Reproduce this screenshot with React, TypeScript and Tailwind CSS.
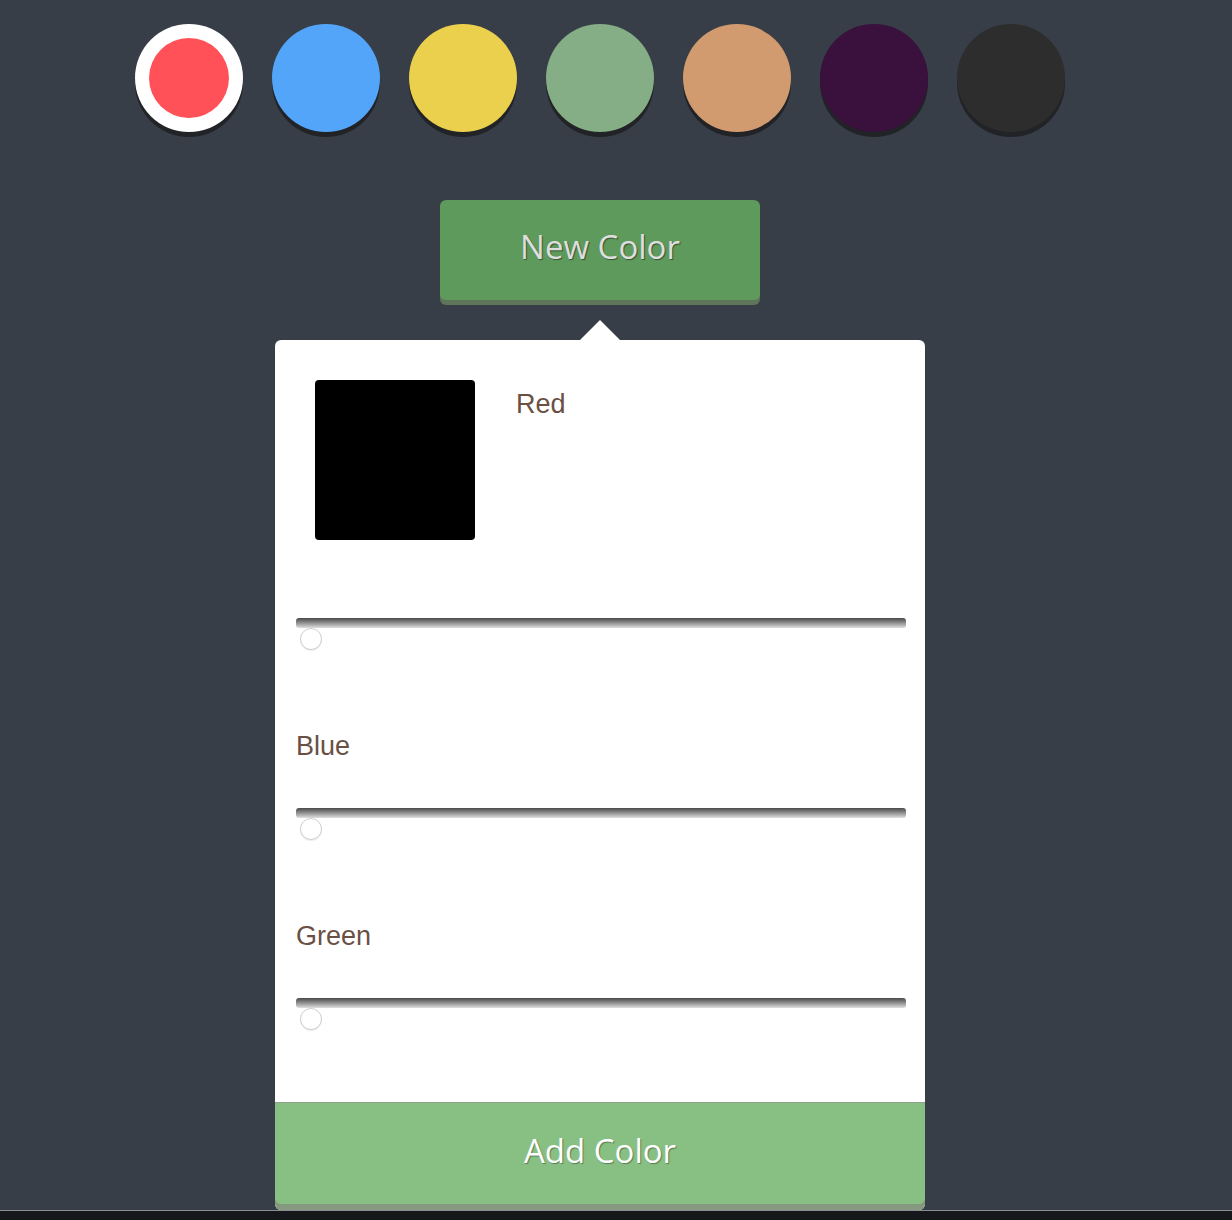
import React from 'react';

const swatches = [
  { color: 'bg-[#ff5157]', selected: true },
  { color: 'bg-[#52a5f9]' },
  { color: 'bg-[#ebd04e]' },
  { color: 'bg-[#85ad86]' },
  { color: 'bg-[#d19b6f]' },
  { color: 'bg-[#3a103d]' },
  { color: 'bg-[#2d2d2d]' },
];

const Slider = () => (
  <div className="relative h-[32px]">
    <div className="h-[10px] rounded-[3px] bg-linear-to-b from-[#4a4a4a] to-[#e0e0e0]" />
    <div className="absolute left-[4px] top-[10px] w-[22px] h-[22px] rounded-full bg-white border border-[#cfcfcf] shadow-[0_1px_1px_rgba(0,0,0,0.08)]" />
  </div>
);

export default function App() {
  return (
    <div className="w-[1232px] h-[1220px] bg-[#373e47] flex flex-col overflow-hidden">
      <div className="w-[1200px] flex-1 flex flex-col items-center">
        {/* Swatches */}
        <div className="flex gap-[29px] mt-[24px]">
          {swatches.map((s, i) => (
            <div
              key={i}
              className={`w-[108px] h-[108px] rounded-full shadow-[0_5px_0_#222326] ${s.selected ? 'bg-white flex items-center justify-center' : s.color}`}
            >
              {s.selected && <div className={`w-[80px] h-[80px] rounded-full ${s.color}`} />}
            </div>
          ))}
        </div>

        {/* New Color button */}
        <button className="mt-[68px] w-[320px] h-[100px] pb-[6px] rounded-[6px] bg-[#5e9a5b] shadow-[0_5px_0_#5f7559] text-[#dedede] text-[33px] [font-family:'Open_Sans',sans-serif] [text-shadow:1px_1px_1px_rgba(0,0,0,0.45)]">
          New Color
        </button>

        {/* Popup */}
        <div className="mt-[20px] flex flex-col items-center">
          <div className="w-0 h-0 border-x-[20px] border-x-transparent border-b-[20px] border-b-white" />
          <div className="w-[650px] bg-white rounded-[6px] flex flex-col [font-family:'Liberation_Sans',Arial,sans-serif] text-[#6a5044] text-[27px]">
            <div className="flex pt-[40px] pl-[40px]">
              <div className="w-[160px] h-[160px] bg-black rounded-[4px]" />
              <div className="ml-[41px] mt-[9px] leading-[30px]">Red</div>
            </div>
            <div className="px-[21px] pr-[19px] mt-[78px]">
              <Slider />
              <div className="mt-[81px] leading-[30px]">Blue</div>
              <div className="mt-[47px]">
                <Slider />
              </div>
              <div className="mt-[81px] leading-[30px]">Green</div>
              <div className="mt-[47px]">
                <Slider />
              </div>
            </div>
            <button className="mt-[72px] h-[108px] pb-[11px] border-t border-[#8fa08a] bg-[#88c083] rounded-b-[6px] shadow-[inset_0_-6px_0_#86987f] text-white text-[33px] [font-family:'Open_Sans',sans-serif] [text-shadow:1px_1px_1px_rgba(0,0,0,0.35)]">
              Add Color
            </button>
          </div>
        </div>
      </div>
      <div className="h-[10px] border-t border-[#8a8f94] bg-[#15171a]" />
    </div>
  );
}
